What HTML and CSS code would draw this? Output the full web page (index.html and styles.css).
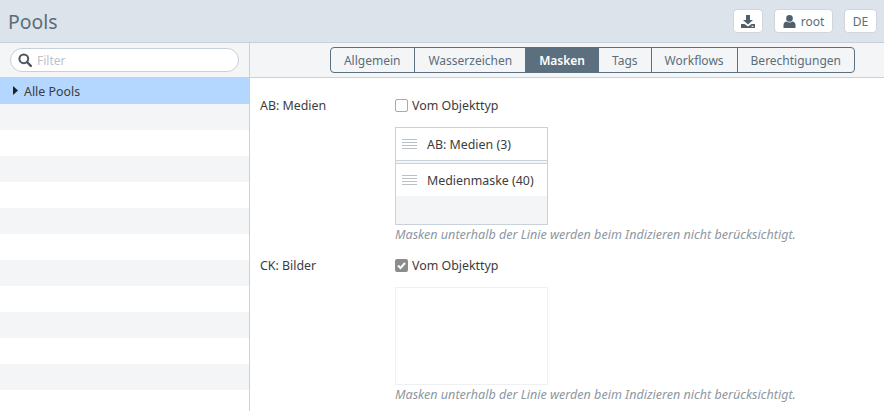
FILE: index.html
```html
<!DOCTYPE html>
<html lang="de">
<head>
<meta charset="utf-8">
<title>Pools</title>
<link rel="stylesheet" href="styles.css">
</head>
<body>
<header class="header">
  <h1 class="title">Pools</h1>
  <div class="actions">
    <button class="btn btn-icon"><svg width="14" height="13" viewBox="0 0 14 13"><path fill="#4f5f6b" d="M5 0h4v5h3L7 9.5 2 5h3z"/><path fill="#4f5f6b" d="M0 9h3.5L7 11.5 10.5 9H14v4H0z"/><rect x="10.5" y="10.8" width="2" height="1" fill="#fff"/></svg></button>
    <button class="btn btn-user"><svg width="13" height="13" viewBox="0 0 13 13"><circle cx="6.5" cy="3.4" r="3.3" fill="#4f5f6b"/><path fill="#4f5f6b" d="M0.5 13v-3c0-2.3 1.6-3.6 3-3.6 1 .7 2 1 3 1s2-.3 3-1c1.4 0 3 1.3 3 3.6v3z"/></svg><span>root</span></button>
    <button class="btn btn-lang">DE</button>
  </div>
</header>
<div class="main">
  <aside class="sidebar">
    <div class="search-bar">
      <label class="search">
        <svg width="14" height="14" viewBox="0 0 14 14"><circle cx="5.8" cy="5.8" r="4.4" fill="none" stroke="#4a5761" stroke-width="2"/><path d="M9 9l3.8 3.8" stroke="#4a5761" stroke-width="2.4" stroke-linecap="round"/></svg>
        <input class="search-input" type="text" placeholder="Filter">
      </label>
    </div>
    <div class="tree">
      <div class="row row-selected"><svg class="caret" width="5" height="9" viewBox="0 0 5 9"><path d="M0 0l5 4.5L0 9z" fill="#222"/></svg><span>Alle Pools</span></div>
      <div class="row"></div><div class="row"></div><div class="row"></div><div class="row"></div><div class="row"></div><div class="row"></div><div class="row"></div><div class="row"></div><div class="row"></div><div class="row"></div><div class="row"></div><div class="row"></div>
    </div>
  </aside>
  <section class="content">
    <div class="tab-bar">
      <nav class="tabs">
        <a class="tab">Allgemein</a>
        <a class="tab">Wasserzeichen</a>
        <a class="tab tab-active">Masken</a>
        <a class="tab">Tags</a>
        <a class="tab">Workflows</a>
        <a class="tab">Berechtigungen</a>
      </nav>
    </div>
    <div class="form">
      <div class="form-row">
        <div class="form-label">AB: Medien</div>
        <div class="form-field">
          <label class="check"><span class="box"></span>Vom Objekttyp</label>
          <div class="mask-list">
            <div class="mask mask-first"><span class="grip"></span>AB: Medien (3)</div>
            <div class="mask"><span class="grip"></span>Medienmaske (40)</div>
          </div>
          <p class="hint">Masken unterhalb der Linie werden beim Indizieren nicht berücksichtigt.</p>
        </div>
      </div>
      <div class="form-row">
        <div class="form-label">CK: Bilder</div>
        <div class="form-field">
          <label class="check"><span class="box box-checked"><svg width="13" height="13" viewBox="0 0 13 13"><path d="M3 6.5l2.5 2.5L10 4" fill="none" stroke="#fff" stroke-width="2"/></svg></span>Vom Objekttyp</label>
          <div class="mask-list mask-list-empty"></div>
          <p class="hint">Masken unterhalb der Linie werden beim Indizieren nicht berücksichtigt.</p>
        </div>
      </div>
    </div>
  </section>
</div>
</body>
</html>
```
FILE: styles.css
```css
* { box-sizing: border-box; }
html, body { margin: 0; height: 100%; overflow: hidden; }
body { font-family: "Noto Sans", sans-serif; font-size: 12.4px; color: #3c3c3c; background: #fff; }

.header { height: 43px; background: #dce3ea; border-bottom: 1px solid #c5d0da; display: flex; align-items: center; justify-content: space-between; padding: 0 7px 0 8px; }
.title { margin: 0; font-size: 19.4px; font-weight: 400; color: #5b6d7b; }
.actions { display: flex; gap: 11px; }
.btn { height: 24px; font: inherit; font-size: 12px; color: #5b6d7b; background: #fff; border: 1px solid #d0d6dc; border-radius: 4px; display: flex; align-items: center; justify-content: center; padding: 0; }
.btn-icon { width: 30px; }
.btn-user { width: 59px; gap: 5px; }
.btn-lang { width: 33px; }

.main { display: flex; height: 368px; }
.sidebar { width: 250px; border-right: 1px solid #c9d2da; flex: none; }
.search-bar { height: 35px; background: #f4f5f7; border-bottom: 1px solid #c9d2da; padding: 5px 10px 0; }
.search { height: 24px; width: 229px; background: #fff; border: 1px solid #c5d0da; border-radius: 12px; display: flex; align-items: center; gap: 5px; padding: 0 0 0 7px; }
.search-input { border: 0; outline: 0; padding: 0; width: 180px; font: inherit; font-size: 12px; background: transparent; }
.search-input::placeholder { color: #bcc3c9; opacity: 1; }
.row { height: 26px; display: flex; align-items: center; gap: 6px; padding: 0 0 0 13px; }
.row:nth-child(even) { background: #f4f5f7; }
.row-selected { background: #b3d7ff; }
.caret { flex: none; margin-bottom: 2px; }

.content { flex: 1; min-width: 0; }
.tab-bar { height: 35px; background: #f4f5f7; border-bottom: 1px solid #c9d2da; padding: 4px 29px 0 0; display: flex; justify-content: flex-end; }
.tabs { display: flex; height: 26px; border: 1px solid #5b6f7e; border-radius: 4px; overflow: hidden; font-size: 12px; }
.tab { display: flex; align-items: center; padding: 0 13px; color: #5b6d7b; border-left: 1px solid #5b6f7e; }
.tab:first-child { border-left: 0; padding-right: 14px; }
.tab-active { background: #5b6f7e; color: #fff; font-weight: 600; }

.form { padding: 17px 0 0 10px; }
.form-row { display: flex; }
.form-row + .form-row { margin-top: 12px; }
.form-label { width: 135px; flex: none; line-height: 20px; padding-top: 1px; }
.form-field { width: 420px; flex: none; }
.check { display: flex; align-items: center; gap: 4px; height: 20px; }
.box { width: 13px; height: 13px; border: 1px solid #aaa; border-radius: 2px; background: #fff; flex: none; }
.box-checked { background: #8c8c8c; border: 0; display: block; }
.box-checked svg { display: block; }
.mask-list { width: 153px; height: 98px; margin-top: 12px; border: 1px solid #c9d2da; background: #f4f5f7; }
.mask-list-empty { background: #fff; border-color: #eef0f3; }
.mask { height: 33px; background: #fff; display: flex; align-items: center; padding-left: 6px; gap: 10px; }
.mask-first { border-bottom: 1px solid #c9d2da; margin-bottom: 2px; }
.mask:not(.mask-first) { border-top: 1px solid #c9d2da; }
.grip { width: 15px; height: 10px; flex: none; background: repeating-linear-gradient(to bottom, #b8c1c8 0, #b8c1c8 1px, transparent 1px, transparent 3px); }
.hint { margin: 2px 0 0; font-size: 12.55px; font-style: italic; color: #8d979f; line-height: 16px; white-space: nowrap; }
```
